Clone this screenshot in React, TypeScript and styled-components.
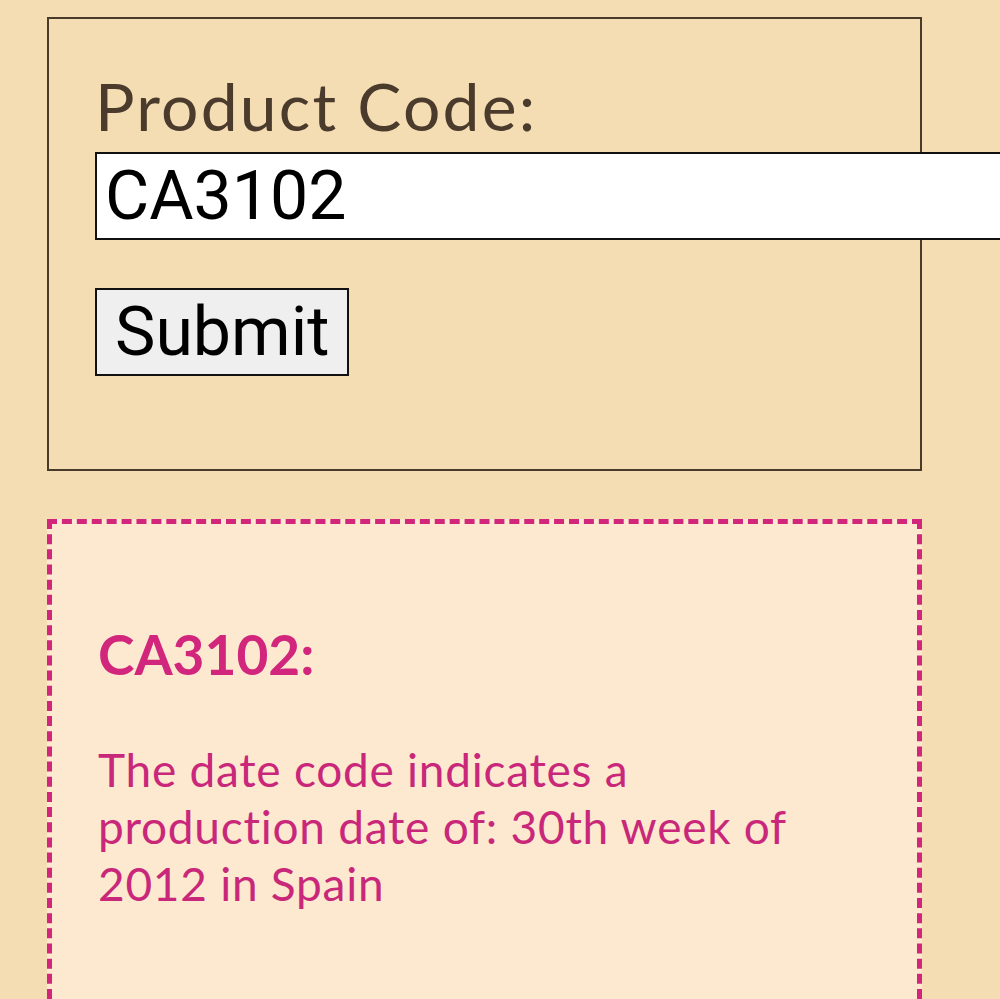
import React from "react";
import styled, { createGlobalStyle } from "styled-components";

const GlobalStyle = createGlobalStyle`
  html, body {
    margin: 0;
    padding: 0;
    background: #f4ddb3;
    overflow: hidden;
  }
  body {
    font-family: Lato, "Noto Sans", sans-serif;
  }
`;

const Page = styled.main`
  min-height: 999px;
  padding: 17px 78px 0 47px;
  box-sizing: border-box;
  display: flex;
  flex-direction: column;
  gap: 48px;
`;

const LookupForm = styled.form`
  border: 2px solid #4a3a2b;
  padding: 47px 0 93px 46px;
  display: flex;
  flex-direction: column;
  align-items: flex-start;
`;

const Label = styled.label`
  font-family: Lato, "Noto Sans", sans-serif;
  font-size: 66px;
  line-height: 80px;
  letter-spacing: 0.033em;
  color: #4a3b2c;
`;

const CodeInput = styled.input`
  font-family: Roboto, "Liberation Sans", sans-serif;
  font-size: 68px;
  width: 960px;
  height: 88px;
  box-sizing: border-box;
  border: 2px solid #111;
  padding: 0 8px;
  margin-top: 6px;
  background: #fff;
  color: #000;
`;

const SubmitButton = styled.button`
  font-family: Roboto, "Liberation Sans", sans-serif;
  font-size: 68px;
  height: 88px;
  box-sizing: border-box;
  margin-top: 48px;
  padding: 0 18px;
  background: #efefef;
  border: 2px solid #111;
  color: #000;
`;

const Result = styled.section`
  flex: 1;
  border: 5px dashed #d1267b;
  border-bottom: none;
  background: #fde9d0;
  padding: 95px 90px 0 46px;
  color: #c9287a;
`;

const ResultCode = styled.h3`
  margin: 0 0 52px;
  font-size: 55px;
  font-weight: 700;
  line-height: 70px;
  color: #d1267c;
`;

const ResultText = styled.p`
  margin: 0;
  font-size: 46px;
  line-height: 57px;
  letter-spacing: 0.016em;
`;

export default function App() {
  return (
    <>
      <GlobalStyle />
      <Page>
        <LookupForm onSubmit={(e) => e.preventDefault()}>
          <Label htmlFor="code">Product Code:</Label>
          <CodeInput id="code" defaultValue="CA3102" />
          <SubmitButton type="submit">Submit</SubmitButton>
        </LookupForm>
        <Result>
          <ResultCode>CA3102:</ResultCode>
          <ResultText>
            The date code indicates a production date of: 30th week of 2012 in
            Spain
          </ResultText>
        </Result>
      </Page>
    </>
  );
}
